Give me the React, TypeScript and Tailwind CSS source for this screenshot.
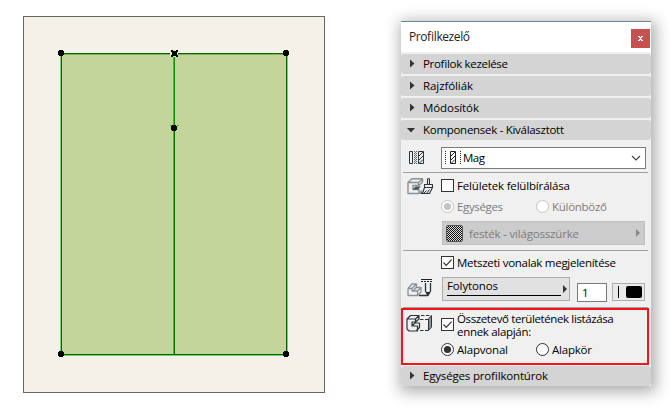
import type { ReactNode } from 'react';
import clsx from 'clsx';

function Label({ width, dim, children }: { width: number; dim?: boolean; children: ReactNode }) {
  return (
    <svg width={width} height="15" className={clsx('shrink-0 overflow-visible', dim ? 'fill-[#7c7c7c]' : 'fill-black')}>
      <text x="0" y="12" textLength={width} className="text-[11.5px] font-medium">
        {children}
      </text>
    </svg>
  );
}

function Section({ title, width, open }: { title: string; width: number; open?: boolean }) {
  return (
    <div className="flex h-5 shrink-0 items-center rounded-[3px] bg-[#d4d4d4] pb-px pl-2">
      <svg width="14" height="19" className="shrink-0 overflow-visible fill-[#333]">
        {open ? <path d="M-2 8h8l-4 4.500z" /> : <path d="M1 5.500l4.500 4-4.500 4z" />}
      </svg>
      <Label width={width}>{title}</Label>
    </div>
  );
}

function Checkbox({ checked }: { checked?: boolean }) {
  return (
    <svg width="13" height="13" className="shrink-0" fill="none">
      <rect x=".5" y=".5" width="12" height="12" fill="#fff" stroke="#333" />
      {checked && <path d="M2.500 6.500l2.700 2.800L10.600 3.600" stroke="#333" strokeWidth="1.2" />}
    </svg>
  );
}

function Radio({ checked, dim }: { checked?: boolean; dim?: boolean }) {
  const color = dim ? '#c3c3c3' : '#333';
  return (
    <svg width="13" height="13" className="shrink-0">
      <circle cx="6.5" cy="6.5" r="6" fill="#fff" stroke={color} />
      {checked && <circle cx="6.5" cy="6.5" r="3.6" fill={color} />}
    </svg>
  );
}

function MaterialIcon() {
  return (
    <svg width="16" height="14" fill="none" stroke="#2b343b">
      <path d="M.5 .5h3v12h-3z" />
      <path d="M5.500 0v13M7.500 0v13" strokeDasharray="1 1" stroke="#555" />
      <path d="M6.500 1v12" strokeDasharray="1 1" stroke="#777" />
      <path d="M9.500 .5h5v12h-5z" />
      <path d="M10 5l4-4M10 9l4-4M10 12.500l4-4" />
    </svg>
  );
}

function SurfaceIcon() {
  return (
    <svg width="27" height="18" fill="none" strokeLinejoin="round">
      <path d="M1 5.500L5 1.700h10.500V5L12 8.500H6v4h6v4H1zM1 5.500h10.500L15.500 2M11.500 5.500v3M12 16.500l3-3" stroke="#8a9095" strokeWidth="1.4" />
      <path d="M5.500 12.500l3-3H14l-3 3z" fill="#46535a" />
      <path d="M20.500 7.500v-5q1-2 2 0v5M17.500 7.500h8v3h-8zM17.500 10.500L16 15l-2 1.500h8.500l3-6" stroke="#2b343b" strokeWidth="1.1" />
      <path d="M16.500 16.500l3-3M19.500 16.500l3-4" stroke="#2b343b" />
    </svg>
  );
}

function ContourIcon() {
  return (
    <svg width="26" height="20" fill="none" strokeLinejoin="round">
      <path d="M1 10.500L5 6h4.500v3L6 13M1 10.500h4L9.500 6M5 10.500V13h5.500l3.500-3.500H9.500M1 10.500V17.500h9.500L14 14V9.500M10.500 13v4.500" stroke="#8a9095" strokeWidth="1.3" />
      <path d="M14 1.500h11" stroke="#222" />
      <path d="M14 3.500h11" stroke="#222" strokeDasharray="2 1" />
      <path d="M18.500 5v8l2.500 4.500 2.500-4.500V5M12 17.500h9" stroke="#2b343b" strokeWidth="1.3" />
      <path d="M19.500 14h3L21 17.500z" fill="#222" />
    </svg>
  );
}

function QuantityIcon() {
  return (
    <svg width="27" height="20" fill="none" strokeLinejoin="round">
      <path d="M1 6l3.500-3.500h8.500V6L9.500 9H6v4h5.500v5H3l-2-2zM1 6h8.500L13 2.500M9.500 6v3M6 13l3-3h4.500v4.500l-3 3" stroke="#2b343b" strokeWidth="1.2" />
      <path d="M15 2.500h10M14 6.500h8M14 17.500h8" stroke="#2b343b" strokeDasharray="3.5 1.5" />
      <path d="M22.500 6l3-3.500v11.500l-3 3.500z" fill="#8a9297" stroke="#2b343b" />
    </svg>
  );
}

function Drawing() {
  return (
    <div className="mt-4 ml-[23px] h-[377px] w-[302px] shrink-0 border border-[#666] bg-[#f4f1e9]">
      <svg width="300" height="375" viewBox="24 17 300 375" shapeRendering="crispEdges">
        <rect x="61" y="54" width="226" height="300" fill="#c4d59b" />
        <path d="M60 53h1v302h-1zM287 53h1v303h-1zM61 355h227v1H61z" fill="#79d269" />
        <path d="M61 54h226v1H61z" fill="#7cac60" />
        <path d="M61 53h1v302h-1zM286 53h1v302h-1zM61 53h226v1H61zM61 354h226v1H61z" fill="#006400" />
        <path d="M173 55h1v299h-1z" fill="#50b838" />
        <path d="M174 55h1v75h-1z" fill="#009000" />
        <path d="M174 130h1v224h-1z" fill="#006c00" />
        {[[61, 53], [286, 53], [61, 354], [286, 354], [174, 128]].map(([x, y]) => (
          <path key={`${x}-${y}`} d="M-2-3h4v1h1v4h-1v1h-4v-1h-1v-4h1z" transform={`translate(${x} ${y})`} />
        ))}
        <path d="M170 50h8v7h-8z" fill="#d9edc2" />
        <path d="M171 50h2v1h3v-1h2v2h-1v3h1v2h-2v-1h-3v1h-2v-2h1v-3h-1z" />
        <path d="M170 125h2v1h-2zM177 125h2v1h-2z" fill="#40b030" />
      </svg>
    </div>
  );
}

export default function App() {
  return (
    <div className="flex h-[414px] w-[670px] items-start overflow-hidden bg-white font-['Open_Sans',sans-serif]">
      <Drawing />
      <div className="mt-[21px] ml-[76px] flex h-[365px] w-[250px] shrink-0 flex-col bg-[#f0f0f0] shadow-[2px_3px_14px_3px_rgba(0,0,0,0.32)]">
        <div className="mb-[2px] flex h-[31px] shrink-0 items-center justify-between border-t border-[#6c8496] bg-white pr-px pl-2">
          <svg width="66" height="18" className="overflow-visible fill-[#222]">
            <text x="0" y="13" textLength="61" className="text-[12px]">Profilkezelő</text>
          </svg>
          <div className="mt-[3px] flex size-[19px] items-center justify-center bg-[#c75050]">
            <svg width="5" height="5" shapeRendering="crispEdges" fill="#fff">
              <path d="M0 0h2v1h1V0h2v1H4v1H3v1h1v1h1v1H3V4H2v1H0V4h1V3h1V2H1V1H0z" />
            </svg>
          </div>
        </div>

        <div className="flex shrink-0 flex-col gap-[2px]">
          <Section title="Profilok kezelése" width={85} />
          <Section title="Rajzfóliák" width={50} />
          <Section title="Módosítók" width={56} />
          <Section title="Komponensek - Kiválasztott" width={141} open />
        </div>

        <div className="mr-[3px] ml-[2px] flex h-[33px] shrink-0 border-b border-[#a0a0a0] pt-[7px]">
          <div className="w-[38px] shrink-0 pt-[4px] pl-[6px]"><MaterialIcon /></div>
          <div className="flex h-[22px] w-[205px] shrink-0 items-center border border-[#7a7a7a] bg-white pb-px pl-[3px]">
            <svg width="17" height="15" className="mr-px shrink-0" fill="none" stroke="#222">
              <path d="M.5 1v14M15.500 1v14" strokeDasharray="1 1" />
              <path d="M5.500 1.500h5v12h-5z" />
              <path d="M6 6l4-4M6 10l4-4M6 13.500l4-4" />
            </svg>
            <Label width={22}>Mag</Label>
            <svg width="10" height="7" className="mr-[4px] ml-auto" fill="none" stroke="#444">
              <path d="M1 2l4 4 4-4" strokeWidth="1.2" />
            </svg>
          </div>
        </div>

        <div className="mr-[3px] ml-[2px] flex h-[78px] shrink-0 border-b border-[#a0a0a0]">
          <div className="w-[38px] shrink-0 pt-[4px] pl-1"><SurfaceIcon /></div>
          <div>
            <div className="mt-[4px] flex h-[17px] items-center gap-[3px]">
              <Checkbox /><Label width={113}>Felületek felülbírálása</Label>
            </div>
            <div className="mt-[5px] flex h-[15px] items-center gap-[3px]">
              <Radio checked dim /><Label width={46} dim>Egységes</Label>
              <div className="w-[27px]" />
              <Radio dim /><Label width={55} dim>Különböző</Label>
            </div>
            <div className="mt-[7px] ml-px flex h-6 w-[203px] items-center border border-[#bfbfbf] bg-[#ccc] pt-px pl-[3px]">
              <div className="mr-[6px] size-[17px] rounded-[2px] border border-[#555] bg-[repeating-conic-gradient(#111_0%_25%,#ddd_0%_50%)] bg-[size:2px_2px]" />
              <Label width={110} dim>festék - világosszürke</Label>
              <svg width="4" height="8" className="mr-[4px] mb-[2px] ml-auto fill-[#888]"><path d="M0 0l4 4-4 4z" /></svg>
            </div>
          </div>
        </div>

        <div className="mr-[3px] ml-[2px] flex h-[57px] shrink-0 border-b border-[#a0a0a0]">
          <div className="w-[38px] shrink-0 pt-[27px] pl-1"><ContourIcon /></div>
          <div>
            <div className="mt-[3px] flex h-[17px] items-center gap-[3px]">
              <Checkbox checked /><Label width={159}>Metszeti vonalak megjelenítése</Label>
            </div>
            <div className="mt-[6px] ml-px flex items-start">
              <div className="flex h-6 w-[128px] border border-[#adadad] bg-[#e1e1e1] pl-1">
                <div className="h-[18px] w-[114px] border-b border-black"><Label width={51}>Folytonos</Label></div>
                <svg width="4" height="8" className="mt-[7px] ml-[2px] fill-[#333]"><path d="M0 0l4 4-4 4z" /></svg>
              </div>
              <div className="mt-[6px] ml-[7px] h-[19px] w-[30px] border border-[#7a7a7a] bg-white pt-px pl-1"><Label width={6}>1</Label></div>
              <div className="mt-[6px] ml-[5px] flex h-[18px] w-[33px] gap-[7px] border border-[#adadad] bg-[#e9e9e9] pt-[2px] pl-[5px]">
                <div className="h-3 w-px bg-black" />
                <div className="h-3 w-4 rounded-[2px] bg-black" />
              </div>
            </div>
          </div>
        </div>

        <div className="mb-px flex h-[57px] w-[248px] shrink-0 border-2 border-[#fa1418]">
          <div className="w-[38px] shrink-0 pt-[3px] pl-[3px]"><QuantityIcon /></div>
          <div>
            <div className="flex h-[29px] items-center gap-[3px]">
              <Checkbox checked />
              <p className="text-[11.5px] leading-[13px] font-medium tracking-[-0.38px] whitespace-nowrap">
                Összetevő területének listázása<br />
                <span className="tracking-[-0.3px]">ennek alapján:</span>
              </p>
            </div>
            <div className="mt-[3px] flex h-[15px] items-center gap-[3px]">
              <Radio checked /><Label width={51}>Alapvonal</Label>
              <div className="w-[22px]" />
              <Radio /><Label width={40}>Alapkör</Label>
            </div>
          </div>
        </div>

        <Section title="Egységes profilkontúrok" width={125} />
      </div>
    </div>
  );
}
